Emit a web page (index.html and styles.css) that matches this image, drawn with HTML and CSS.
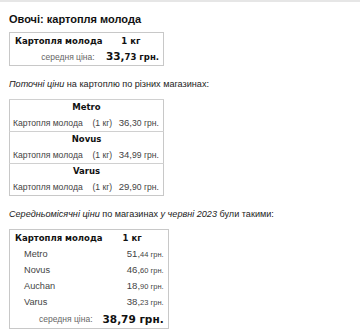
FILE: index.html
```html
<!DOCTYPE html>
<html lang="uk">
<head>
<meta charset="utf-8">
<link rel="stylesheet" href="styles.css">
</head>
<body>
<div class="topline"></div>
<main class="page">
  <h1 class="title">Овочі: картопля молода</h1>
  <table class="box summary">
    <tr class="head"><td class="name">Картопля молода</td><td class="unit">1 кг</td></tr>
    <tr class="avg"><td class="lbl">середня ціна:</td><td class="big"><span class="int">33,</span>73 грн.</td></tr>
  </table>

  <p class="note"><i>Поточні ціни</i> на картоплю по різних магазинах:</p>
  <table class="box shops">
    <tr class="shop"><td colspan="3">Metro</td></tr>
    <tr class="item"><td>Картопля молода</td><td class="qty">(1 кг)</td><td class="price"><span class="int">36,</span>30 грн.</td></tr>
    <tr class="shop"><td colspan="3">Novus</td></tr>
    <tr class="item"><td>Картопля молода</td><td class="qty">(1 кг)</td><td class="price"><span class="int">34,</span>99 грн.</td></tr>
    <tr class="shop"><td colspan="3">Varus</td></tr>
    <tr class="item"><td>Картопля молода</td><td class="qty">(1 кг)</td><td class="price"><span class="int">29,</span>90 грн.</td></tr>
  </table>

  <p class="note"><i>Середньомісячні ціни</i> по магазинах <i>у червні 2023</i> були такими:</p>
  <table class="box monthly">
    <tr class="head"><td class="name">Картопля молода</td><td class="unit">1 кг</td></tr>
    <tr class="row"><td class="store">Metro</td><td class="price"><span class="int">51,</span>44 грн.</td></tr>
    <tr class="row"><td class="store">Novus</td><td class="price"><span class="int">46,</span>60 грн.</td></tr>
    <tr class="row"><td class="store">Auchan</td><td class="price"><span class="int">18,</span>90 грн.</td></tr>
    <tr class="row"><td class="store">Varus</td><td class="price"><span class="int">38,</span>23 грн.</td></tr>
    <tr class="avg"><td class="lbl">середня ціна:</td><td class="big">38,79 грн.</td></tr>
  </table>
</main>
</body>
</html>
```
FILE: styles.css
```css
html, body { margin: 0; padding: 0; background: #fff; }
body { font-family: "Liberation Sans", Arial, sans-serif; color: #222; }
.topline { height: 2px; background: #e6e6e6; }
.page { padding: 11px 9px 0 9px; }
.title { margin: 0 0 6px 0; font-size: 11px; font-weight: bold; color: #111; line-height: 13px; }
.box { border-collapse: collapse; border: 1px solid #c8c8c8; width: 155px; }
.box td { padding: 0; white-space: nowrap; line-height: 11px; }
.head td { font-family: "DejaVu Sans", Verdana, sans-serif; font-weight: bold; font-size: 8.5px; color: #111; height: 16px; }
.head .name { padding-left: 5px; text-align: left; }
.head .unit { text-align: center; padding-right: 6px; }
.summary .avg td { height: 16px; }
.lbl { font-size: 8.5px; color: #666; text-align: right; padding-right: 10px !important; }
.big { font-family: "DejaVu Sans", Verdana, sans-serif; font-weight: bold; font-size: 8.5px; color: #111; text-align: right; padding-right: 4px !important; }
.big .int { font-size: 10.5px; }
.note { margin: 12px 0 9px 0; font-size: 9.1px; color: #222; line-height: 12px; white-space: nowrap; }
.shops tr.shop td { border-top: 1px solid #d0d0d0; font-family: "DejaVu Sans", Verdana, sans-serif; font-weight: bold; font-size: 8.5px; color: #111; text-align: center; height: 15px; }
.shops tr.item td { font-size: 8.6px; color: #444; height: 16px; }
.shops tr.item td:first-child { padding-left: 3px; }
.shops .qty { text-align: center; }
.price { text-align: right; padding-right: 4px !important; font-size: 7.5px; color: #444; }
.price .int { font-size: 9.6px; }
.monthly .head td { height: 16px; }
.monthly .row td { height: 16px; color: #444; }
.monthly .store { padding-left: 14px !important; font-size: 9.2px; }
.monthly .avg td { height: 18px; }
.monthly .big { font-size: 10.5px; }
```
